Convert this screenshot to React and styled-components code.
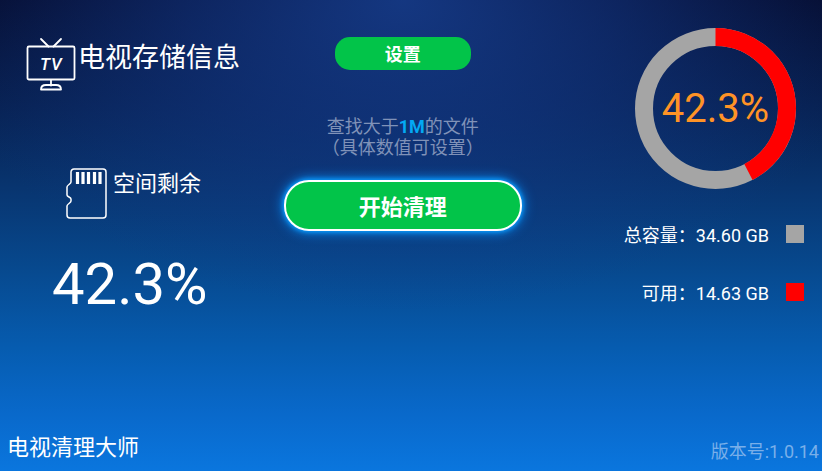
import styled, { createGlobalStyle } from "styled-components";

const GlobalStyle = createGlobalStyle`
  * {
    box-sizing: border-box;
  }

  body {
    margin: 0;
    font-family: Roboto, "Noto Sans CJK SC", sans-serif;
    color: white;
  }
`;

const Page = styled.div`
  display: flex;
  flex-direction: column;
  justify-content: space-between;
  min-height: 100vh;
  background:
    radial-gradient(
      ellipse 58% 66% at 49% 0%,
      rgba(24, 66, 150, 0.8) 0%,
      rgba(20, 58, 138, 0.55) 45%,
      rgba(12, 44, 110, 0) 100%
    ),
    linear-gradient(
      180deg,
      #050b2c 0%,
      #072050 22%,
      #083570 40%,
      #074a90 58%,
      #065cb0 74%,
      #0969cb 88%,
      #0a76de 100%
    );
`;

const Main = styled.main`
  display: grid;
  grid-template-columns: 34% 30% 36%;
`;

const StoragePanel = styled.section`
  display: flex;
  flex-direction: column;
  padding: 37px 0 0 26px;
`;

const TitleRow = styled.div`
  display: flex;
  gap: 2px;
  height: 54px;
`;

const Title = styled.h1`
  margin: 0;
  font-size: 27px;
  font-weight: 400;
  line-height: 42px;
  white-space: nowrap;
`;

const FreeRow = styled.div`
  display: flex;
  gap: 6px;
  margin-top: 77px;
  padding-left: 40px;
`;

const FreeLabel = styled.h2`
  margin: 0;
  font-size: 22px;
  font-weight: 400;
  line-height: 32px;
  white-space: nowrap;
`;

const FreeValue = styled.div`
  margin-top: 32px;
  padding-left: 26px;
  font-size: 58px;
  line-height: 64px;
`;

const ActionPanel = styled.section`
  display: flex;
  flex-direction: column;
  align-items: center;
  padding-top: 37px;
`;

const Button = styled.button`
  padding: 0 0 2px;
  border: none;
  background-color: #02c449;
  color: white;
  font-family: inherit;
  font-weight: 700;
  cursor: pointer;
`;

const SettingsButton = styled(Button)`
  width: 136px;
  height: 33px;
  border-radius: 15px;
  font-size: 18px;
`;

const StartButton = styled(Button)`
  width: 238px;
  height: 51px;
  margin-top: 22px;
  border: 2px solid white;
  border-radius: 25px;
  font-size: 22px;
  box-shadow:
    0 0 4px 1px #0a9dff,
    0 0 12px 2px #0884ea;
`;

const Hint = styled.p`
  margin: 46px 0 0;
  color: #8092b8;
  font-size: 18px;
  line-height: 21px;
  text-align: center;
  white-space: nowrap;
`;

const Size = styled.strong`
  color: #03a9f4;
  font-weight: 700;
`;

const UsagePanel = styled.section`
  display: flex;
  flex-direction: column;
  align-items: flex-end;
  padding: 28px 18px 0 0;
`;

const ChartBox = styled.div`
  display: grid;
  place-items: center;
  margin-right: 8px;

  > * {
    grid-area: 1 / 1;
  }
`;

const ChartValue = styled.span`
  color: #ff9326;
  font-size: 40px;
  line-height: 48px;
`;

const Legend = styled.ul`
  display: flex;
  flex-direction: column;
  gap: 40px;
  margin: 36px 0 0;
  padding: 0;
  list-style: none;
`;

const LegendItem = styled.li`
  display: flex;
  align-items: center;
  justify-content: flex-end;
  gap: 17px;
  height: 18px;
  font-size: 18px;
  white-space: nowrap;
`;

const Swatch = styled.span`
  width: 18px;
  height: 18px;
  background-color: ${(props) => props.$color};
`;

const Footer = styled.footer`
  display: flex;
  align-items: flex-end;
  justify-content: space-between;
  padding: 0 3px 7px 7px;
`;

const AppName = styled.span`
  font-size: 22px;
  line-height: 32px;
`;

const Version = styled.span`
  color: #79afe9;
  font-size: 18px;
  line-height: 24px;
`;

const PERCENT = 42.3;

const legend = [
  { label: "总容量", value: "34.60 GB", color: "#a5a5a5" },
  { label: "可用", value: "14.63 GB", color: "#ff0000" },
];

function TvIcon() {
  return (
    <svg
      width="50"
      height="54"
      viewBox="0 0 50 54"
      fill="none"
      stroke="white"
      strokeWidth="1.8"
      strokeLinecap="round"
      strokeLinejoin="round"
      aria-hidden="true"
    >
      <path d="M15 2l7.500 7.500M35 2l-7.500 7.500" />
      <rect x="1.500" y="9.500" width="47" height="33" rx="1.500" />
      <path d="M25 43v5.500M15 52.500h20c0-3-2-4.500-5-4.500H20c-3 0-5 1.500-5 4.500z" />
      <text
        x="25"
        y="33"
        fill="white"
        stroke="none"
        fontFamily="Roboto, sans-serif"
        fontSize="17"
        fontWeight="500"
        fontStyle="italic"
      >
        <tspan x="14">T</tspan>
        <tspan x="25">V</tspan>
      </text>
    </svg>
  );
}

function SdCardIcon() {
  return (
    <svg
      width="41"
      height="52"
      viewBox="0 0 41 52"
      fill="none"
      stroke="white"
      strokeWidth="1.5"
      strokeLinejoin="round"
      aria-hidden="true"
    >
      <path d="M8 1h29a3 3 0 0 1 3 3v43a3 3 0 0 1-3 3H4a3 3 0 0 1-3-3V38c0-2 4-3 4-5v-2c0-2-4-2-4-4v-8c0-2 4-3 4-5V4a3 3 0 0 1 3-3z" />
      <path
        d="M11.500 4v12M17 4v12M22.500 4v12M28.500 4v12M34 4v12"
        strokeWidth="3.200"
      />
    </svg>
  );
}

function DonutChart({ percent }) {
  const radius = 71.5;
  const length = 2 * Math.PI * radius;

  return (
    <svg width="161" height="161" viewBox="0 0 161 161" aria-hidden="true">
      <g fill="none" strokeWidth="18" transform="rotate(-90 80.5 80.5)">
        <circle cx="80.5" cy="80.5" r={radius} stroke="#a5a5a5" />
        <circle
          cx="80.5"
          cy="80.5"
          r={radius}
          stroke="#ff0000"
          strokeDasharray={`${(length * percent) / 100} ${length}`}
        />
      </g>
    </svg>
  );
}

function App() {
  return (
    <Page>
      <GlobalStyle />
      <Main>
        <StoragePanel>
          <TitleRow>
            <TvIcon />
            <Title>电视存储信息</Title>
          </TitleRow>
          <FreeRow>
            <SdCardIcon />
            <FreeLabel>空间剩余</FreeLabel>
          </FreeRow>
          <FreeValue>{PERCENT}%</FreeValue>
        </StoragePanel>
        <ActionPanel>
          <SettingsButton type="button">设置</SettingsButton>
          <Hint>
            查找大于<Size>1M</Size>的文件
            <br />
            （具体数值可设置）
          </Hint>
          <StartButton type="button">开始清理</StartButton>
        </ActionPanel>
        <UsagePanel>
          <ChartBox>
            <DonutChart percent={PERCENT} />
            <ChartValue>{PERCENT}%</ChartValue>
          </ChartBox>
          <Legend>
            {legend.map((item) => (
              <LegendItem key={item.label}>
                <span>
                  {item.label}：{item.value}
                </span>
                <Swatch $color={item.color} />
              </LegendItem>
            ))}
          </Legend>
        </UsagePanel>
      </Main>
      <Footer>
        <AppName>电视清理大师</AppName>
        <Version>版本号:1.0.14</Version>
      </Footer>
    </Page>
  );
}

export default App;
